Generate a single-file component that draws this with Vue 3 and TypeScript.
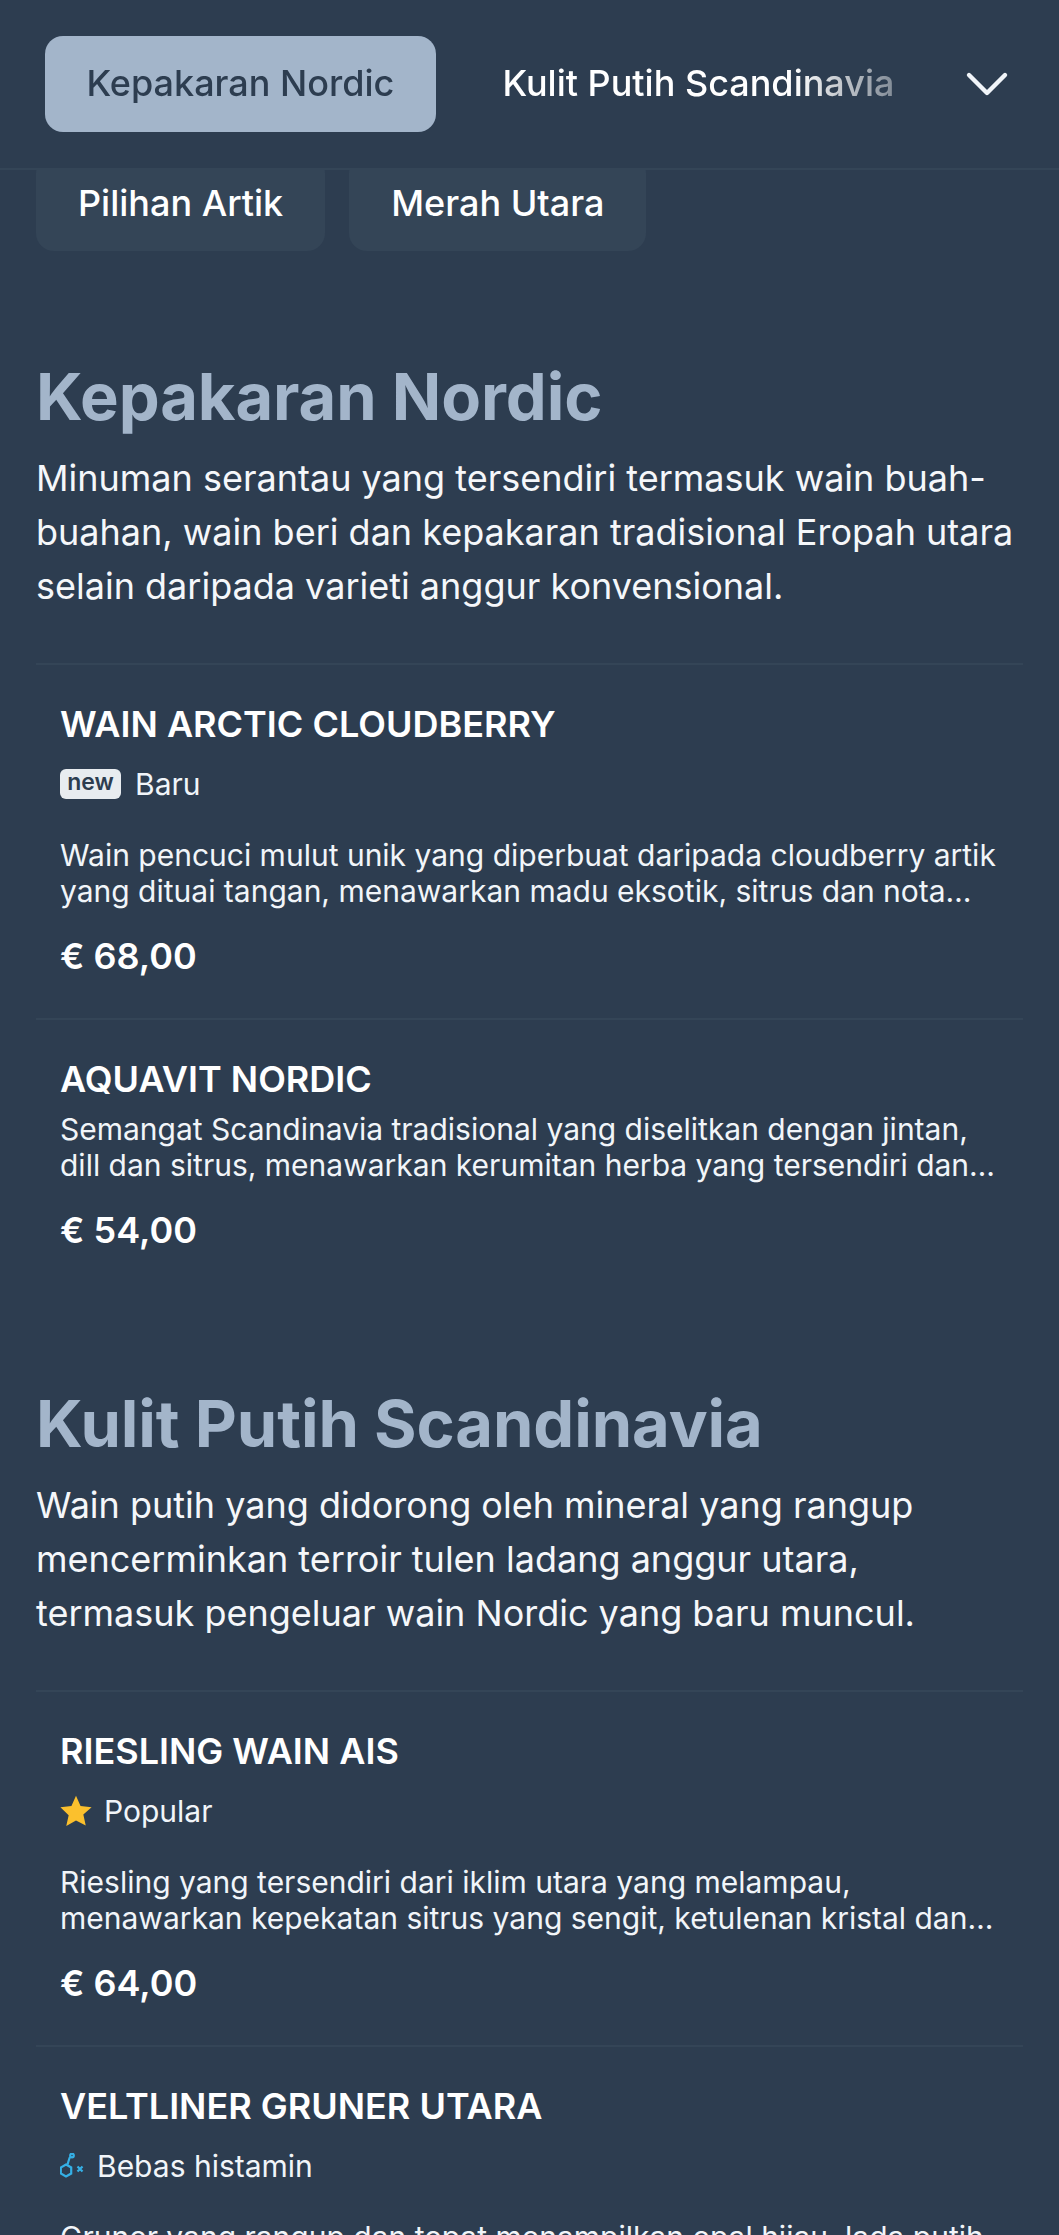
<script setup lang="ts">
interface Item {
  name: string
  tag?: { kind: 'new' | 'star' | 'mol'; label: string }
  desc: string
  price: string
}
interface Section {
  title: string
  intro: string
  items: Item[]
}
const sections: Section[] = [
  {
    title: 'Kepakaran Nordic',
    intro:
      'Minuman serantau yang tersendiri termasuk wain buah-buahan, wain beri dan kepakaran tradisional Eropah utara selain daripada varieti anggur konvensional.',
    items: [
      {
        name: 'WAIN ARCTIC CLOUDBERRY',
        tag: { kind: 'new', label: 'Baru' },
        desc: 'Wain pencuci mulut unik yang diperbuat daripada cloudberry artik yang dituai tangan, menawarkan madu eksotik, sitrus dan nota bunga yang halus dalam setiap tegukan.',
        price: '€ 68,00',
      },
      {
        name: 'AQUAVIT NORDIC',
        desc: 'Semangat Scandinavia tradisional yang diselitkan dengan jintan, dill dan sitrus, menawarkan kerumitan herba yang tersendiri dan kemasan yang bersih serta panjang.',
        price: '€ 54,00',
      },
    ],
  },
  {
    title: 'Kulit Putih Scandinavia',
    intro:
      'Wain putih yang didorong oleh mineral yang rangup mencerminkan terroir tulen ladang anggur utara, termasuk pengeluar wain Nordic yang baru muncul.',
    items: [
      {
        name: 'RIESLING WAIN AIS',
        tag: { kind: 'star', label: 'Popular' },
        desc: 'Riesling yang tersendiri dari iklim utara yang melampau, menawarkan kepekatan sitrus yang sengit, ketulenan kristal dan kemanisan yang seimbang serta tahan lama.',
        price: '€ 64,00',
      },
      {
        name: 'VELTLINER GRUNER UTARA',
        tag: { kind: 'mol', label: 'Bebas histamin' },
        desc: 'Gruner yang rangup dan tepat menampilkan epal hijau, lada putih dan mineral yang segar dengan kemasan yang bersih dan menyegarkan sepanjang masa.',
        price: '€ 58,00',
      },
    ],
  },
]
</script>

<template>
  <div class="page">
    <header class="topbar">
      <div class="tabs">
        <button class="tab tab-active">Kepakaran Nordic</button>
        <button class="tab">Kulit Putih Scandinavia</button>
      </div>
      <svg class="chevron" viewBox="0 0 44 28" fill="none">
        <path d="M4 5 L22 23 L40 5" stroke="#f1f5f9" stroke-width="4.4" stroke-linecap="round" stroke-linejoin="round" />
      </svg>
    </header>

    <div class="chips">
      <span class="chip">Pilihan Artik</span>
      <span class="chip">Merah Utara</span>
    </div>

    <section v-for="s in sections" :key="s.title" class="section">
      <h2 class="section-title">{{ s.title }}</h2>
      <p class="intro">{{ s.intro }}</p>
      <article v-for="it in s.items" :key="it.name" class="item">
        <h3 class="item-name">{{ it.name }}</h3>
        <div v-if="it.tag" class="tag">
          <span v-if="it.tag.kind === 'new'" class="new-badge">new</span>
          <svg v-else-if="it.tag.kind === 'star'" class="star" viewBox="0 0 24 24">
            <path fill="#fbc02d" d="M12 .6l3.4 7.6 8.3.9-6.2 5.6 1.8 8.2L12 19.1l-7.3 4.2 1.8-8.2L.3 9.1l8.3-.9z" />
          </svg>
          <svg v-else class="mol" viewBox="0 0 26 26" fill="none" stroke="#35b0e6" stroke-width="2.2">
            <path d="M6 11.5l5.2 3v6l-5.2 3-5.2-3v-6z" />
            <path d="M7.5 11.5L9.5 5l1-1" />
            <circle cx="12" cy="2.5" r="1.8" />
            <path d="M17.5 13.5l5 5M22.5 13.5l-5 5" stroke-width="2.2" />
          </svg>
          <span>{{ it.tag.label }}</span>
        </div>
        <p class="item-desc">{{ it.desc }}</p>
        <div class="price">{{ it.price }}</div>
      </article>
    </section>
  </div>
</template>

<style scoped>
.page {
  position: relative;
  height: 2235px;
  overflow: hidden;
  background: #2d3d50;
  color: #fff;
  font-family: Inter, "Liberation Sans", sans-serif;
}
.topbar {
  position: absolute;
  top: 0;
  left: 0;
  right: 0;
  height: 170px;
  box-sizing: border-box;
  padding: 36px 0 0 45px;
  display: flex;
  align-items: flex-start;
  background: #2d3d50;
  border-bottom: 2px solid #344557;
  z-index: 2;
}
.tabs {
  display: flex;
  gap: 25px;
  width: 850px;
  overflow: hidden;
  -webkit-mask-image: linear-gradient(to right, #000 88%, rgba(0, 0, 0, 0.4) 100%);
  mask-image: linear-gradient(to right, #000 88%, rgba(0, 0, 0, 0.4) 100%);
}
.tab {
  flex: none;
  height: 96px;
  padding: 0 41.5px 2px;
  border: 0;
  border-radius: 18px;
  background: transparent;
  color: #fff;
  font: 500 36px Inter, sans-serif;
}
.tab-active {
  background: #a3b5ca;
  color: #2d3d50;
}
.chevron {
  width: 44px;
  height: 28px;
  margin: 34px 0 0 70px;
}
.chips {
  display: flex;
  gap: 24px;
  padding: 155px 36px 14px;
}
.chip {
  height: 96px;
  padding: 0 42px 0;
  box-sizing: border-box;
  display: flex;
  align-items: center;
  border-radius: 18px;
  background: #344557;
  font-size: 36px;
  font-weight: 500;
}
.section {
  padding: 0 36px;
  margin-top: 92px;
}
.section-title {
  margin: 0;
  font-family: Inter, sans-serif;
  font-size: 65px;
  letter-spacing: -0.1px;
  line-height: 80px;
  font-weight: 700;
  color: #a3b5ca;
}
.intro {
  margin: 14px 0 0;
  font-size: 36px;
  line-height: 54px;
  color: #f5f7fa;
}
.item {
  margin-top: 50px;
  padding: 36px 24px 39px;
  border-top: 2px solid #344557;
}
.item + .item {
  margin-top: 0;
}
.item-name {
  margin: 0;
  font-size: 36px;
  line-height: 46px;
  font-weight: 600;
}
.tag {
  display: flex;
  align-items: center;
  margin-top: 14px;
  height: 46px;
  font-size: 30px;
  color: #f1f5f9;
}
.new-badge {
  width: 61px;
  height: 30px;
  margin-right: 14px;
  border-radius: 6px;
  background: #e8ecf0;
  color: #2d3d50;
  font: 600 23px/26px Inter, sans-serif;
  text-align: center;
}
.star {
  width: 32px;
  height: 32px;
  margin-right: 12px;
}
.mol {
  width: 26px;
  height: 26px;
  margin-right: 11px;
}
.item-desc {
  margin: 30px 0 0;
  font-size: 30px;
  line-height: 36px;
  color: #f1f5f9;
  display: -webkit-box;
  -webkit-box-orient: vertical;
  -webkit-line-clamp: 2;
  overflow: hidden;
}
.item > .item-name + .item-desc {
  margin-top: 9px;
}
.price {
  margin-top: 24px;
  font-size: 36px;
  line-height: 46px;
  font-weight: 600;
}
</style>
